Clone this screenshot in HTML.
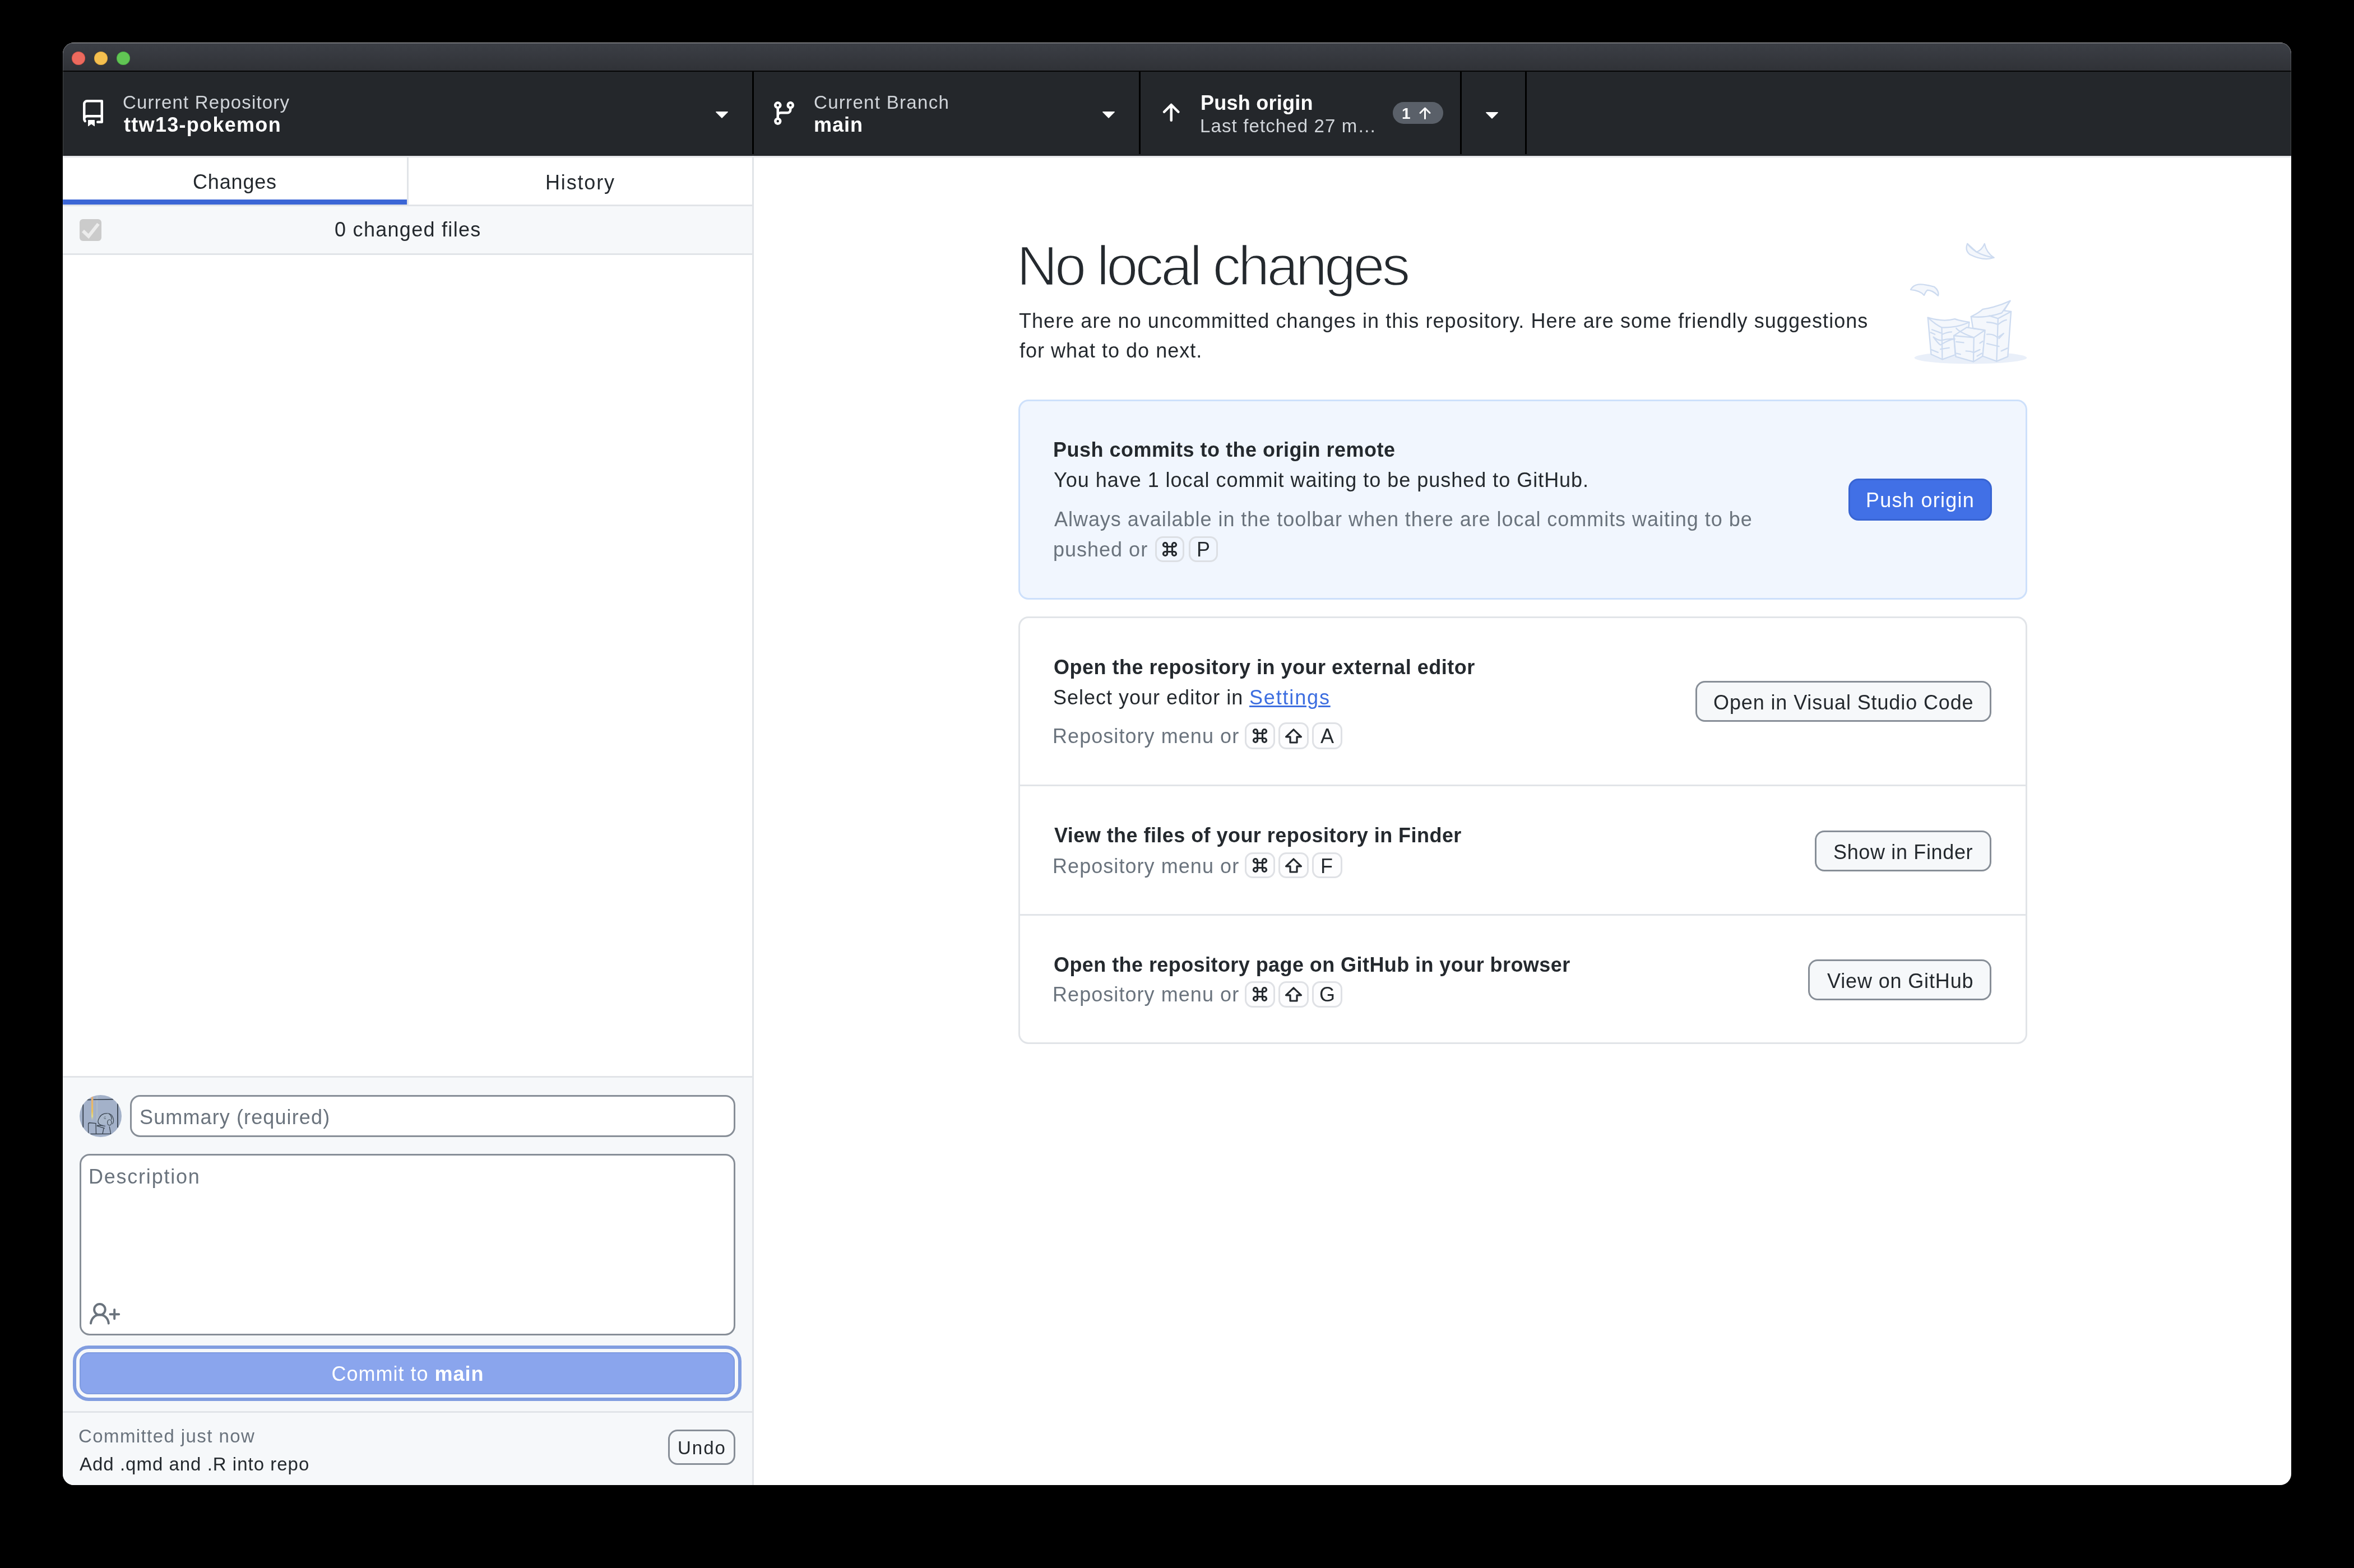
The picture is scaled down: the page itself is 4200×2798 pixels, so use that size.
<!DOCTYPE html>
<html><head><meta charset="utf-8">
<style>
html,body{margin:0;padding:0;background:#000;}
body{width:4200px;height:2798px;background:#000;position:relative;overflow:hidden;font-family:"Liberation Sans",sans-serif;}
.a{position:absolute;box-sizing:border-box;}
.t{position:absolute;white-space:nowrap;font-family:"Liberation Sans",sans-serif;will-change:transform;}
svg{position:absolute;overflow:visible;}
</style></head><body>
<!-- window -->
<div class="a" style="left:112px;top:76px;width:3976px;height:2574px;border-radius:20px;background:#fff;overflow:hidden;">
  <!-- title bar -->
  <div class="a" style="left:0;top:0;width:3976px;height:50px;background:linear-gradient(#3c3f46,#303237);box-shadow:inset 0 1px 0 rgba(255,255,255,0.6);"></div>
  <div class="a" style="left:0;top:50px;width:3976px;height:2px;background:#050505;"></div>
  <!-- toolbar -->
  <div class="a" style="left:0;top:52px;width:3976px;height:150px;background:#24272b;border-bottom:1px solid #16181b;"></div>
  <div class="a" style="left:0;top:202px;width:3976px;height:3px;background:#e3e4e8;"></div>
  <!-- left pane -->
  <div class="a" style="left:1230px;top:205px;width:3px;height:2369px;background:#e1e4e8;"></div>
  <!-- bottom-left pane bg -->
  <div class="a" style="left:0;top:1844px;width:1230px;height:3px;background:#e1e4e8;"></div>
  <div class="a" style="left:0;top:1847px;width:1230px;height:727px;background:#f6f8fa;"></div>
  <div class="a" style="left:0;top:2442px;width:1230px;height:3px;background:#e1e4e8;"></div>
</div>
<div class="a" style="left:112px;top:76px;width:3976px;height:2574px;border-radius:20px;border:1px solid rgba(255,255,255,0.15);pointer-events:none;z-index:5;"></div>
<!-- traffic lights -->
<div class="a" style="left:128px;top:92px;width:24px;height:24px;border-radius:50%;background:#ec6a5e;box-shadow:inset 0 0 0 1px rgba(190,50,40,0.35);"></div>
<div class="a" style="left:168px;top:92px;width:24px;height:24px;border-radius:50%;background:#f4bf4f;box-shadow:inset 0 0 0 1px rgba(190,130,30,0.35);"></div>
<div class="a" style="left:208px;top:92px;width:24px;height:24px;border-radius:50%;background:#61c554;box-shadow:inset 0 0 0 1px rgba(40,140,40,0.35);"></div>

<!-- toolbar dividers -->
<div class="a" style="left:1342px;top:128px;width:3px;height:147px;background:#000;"></div>
<div class="a" style="left:2032px;top:128px;width:3px;height:147px;background:#000;"></div>
<div class="a" style="left:2605px;top:128px;width:3px;height:147px;background:#000;"></div>
<div class="a" style="left:2721px;top:128px;width:3px;height:147px;background:#000;"></div>

<!-- toolbar icons -->
<svg style="left:142px;top:178px" width="48" height="48" viewBox="0 0 16 16"><path fill="#fff" d="M2 2.5A2.5 2.5 0 0 1 4.5 0h8.75a.75.75 0 0 1 .75.75v12.5a.75.75 0 0 1-.75.75h-2.5a.75.75 0 0 1 0-1.5h1.75v-2h-8a1 1 0 0 0-.714 1.7.75.75 0 1 1-1.072 1.05A2.495 2.495 0 0 1 2 11.5Zm10.5-1h-8a1 1 0 0 0-1 1v6.708A2.486 2.486 0 0 1 4.5 9h8ZM5 12.25a.25.25 0 0 1 .25-.25h3.5a.25.25 0 0 1 .25.25v3.25a.25.25 0 0 1-.4.2l-1.45-1.087a.249.249 0 0 0-.3 0L5.4 15.7a.25.25 0 0 1-.4-.2Z"/></svg>
<svg style="left:1263.5px;top:178px" width="48" height="48" viewBox="0 0 16 16"><path fill="#fff" d="m4.427 7.427 3.396 3.396a.25.25 0 0 0 .354 0l3.396-3.396A.25.25 0 0 0 11.396 7H4.604a.25.25 0 0 0-.177.427Z"/></svg>
<svg style="left:1374.5px;top:178px" width="48" height="48" viewBox="0 0 16 16"><path fill="#fff" d="M9.5 3.25a2.25 2.25 0 1 1 3 2.122V6A2.5 2.5 0 0 1 10 8.5H6a1 1 0 0 0-1 1v1.128a2.251 2.251 0 1 1-1.5 0V5.372a2.25 2.25 0 1 1 1.5 0v1.836A2.493 2.493 0 0 1 6 7h4a1 1 0 0 0 1-1v-.628A2.25 2.25 0 0 1 9.5 3.25Zm-6 0a.75.75 0 1 0 1.5 0 .75.75 0 0 0-1.5 0Zm8.25-.75a.75.75 0 1 0 0 1.5.75.75 0 0 0 0-1.5ZM4.25 12a.75.75 0 1 0 0 1.5.75.75 0 0 0 0-1.5Z"/></svg>
<svg style="left:1953.5px;top:178px" width="48" height="48" viewBox="0 0 16 16"><path fill="#fff" d="m4.427 7.427 3.396 3.396a.25.25 0 0 0 .354 0l3.396-3.396A.25.25 0 0 0 11.396 7H4.604a.25.25 0 0 0-.177.427Z"/></svg>
<svg style="left:2065px;top:178px" width="48" height="48" viewBox="0 0 16 16"><path fill="#fff" d="M3.47 7.78a.75.75 0 0 1 0-1.06l4.25-4.25a.75.75 0 0 1 1.06 0l4.25 4.25a.751.751 0 0 1-.018 1.042.751.751 0 0 1-1.042.018L9 4.81v7.44a.75.75 0 0 1-1.5 0V4.81L4.53 7.78a.75.75 0 0 1-1.06 0Z"/></svg>
<div class="a" style="left:2485px;top:182px;width:90px;height:39px;border-radius:20px;background:#5a6069;"></div>
<svg style="left:2526px;top:186.5px" width="32" height="32" viewBox="0 0 16 16"><path fill="#fff" d="M3.47 7.78a.75.75 0 0 1 0-1.06l4.25-4.25a.75.75 0 0 1 1.06 0l4.25 4.25a.751.751 0 0 1-.018 1.042.751.751 0 0 1-1.042.018L9 4.81v7.44a.75.75 0 0 1-1.5 0V4.81L4.53 7.78a.75.75 0 0 1-1.06 0Z"/></svg>
<svg style="left:2637.7px;top:178.5px" width="48" height="48" viewBox="0 0 16 16"><path fill="#fff" d="m4.427 7.427 3.396 3.396a.25.25 0 0 0 .354 0l3.396-3.396A.25.25 0 0 0 11.396 7H4.604a.25.25 0 0 0-.177.427Z"/></svg>

<!-- tabs -->
<div class="a" style="left:112px;top:356px;width:614px;height:9px;background:#3b66d6;"></div>
<div class="a" style="left:726px;top:281px;width:3px;height:84px;background:#e1e4e8;"></div>
<div class="a" style="left:112px;top:365px;width:1230px;height:3px;background:#e1e4e8;"></div>
<div class="a" style="left:112px;top:368px;width:1230px;height:84px;background:#f6f8fa;"></div>
<div class="a" style="left:112px;top:452px;width:1230px;height:3px;background:#e1e4e8;"></div>
<!-- checkbox -->
<div class="a" style="left:142px;top:391px;width:39px;height:39px;border-radius:6px;background:#cbcbcb;"></div>
<svg style="left:0;top:0" width="1" height="1"><polyline points="148,412 158,421.5 175.5,399.5" fill="none" stroke="#ececec" stroke-width="6"/></svg>

<!-- commit area -->
<svg style="left:142px;top:1954px" width="75" height="75" viewBox="0 0 75 75">
  <defs><clipPath id="av"><circle cx="37.5" cy="37.5" r="37.5"/></clipPath>
  <linearGradient id="og" x1="0" y1="0" x2="0" y2="1"><stop offset="0" stop-color="#e9ae72"/><stop offset="0.6" stop-color="#ecc25a"/><stop offset="0.8" stop-color="#e3dc8a"/><stop offset="1" stop-color="#a9b8c4" stop-opacity="0"/></linearGradient></defs>
  <g clip-path="url(#av)">
    <rect width="75" height="75" fill="#a3b1c9"/>
    <rect x="30" y="2" width="2.5" height="44" fill="#b5c3c9" opacity="0.6"/>
    <rect x="21" y="3" width="3.2" height="44" fill="url(#og)"/>
    <path d="M13.3 8.6 L20.5 8.4 M24.5 8.2 L60.5 7.6" stroke="#36404c" stroke-width="1.6" fill="none"/>
    <path d="M6.2 16.5 V58" stroke="#36404c" stroke-width="1.8" fill="none"/>
    <path d="M68 14.8 V58" stroke="#36404c" stroke-width="1.8" fill="none"/>
    <path d="M35 52 C 32 49 33 44 35.5 40 C 38 35 43 33 48 32.8 C 53 32.5 57 34 59 39 C 61 43 61 48 58.5 52" fill="#aab8cc" stroke="#36404c" stroke-width="1.2"/>
    <path d="M35 52 C 38 54 42 55.5 46 55.5" fill="none" stroke="#36404c" stroke-width="1.1"/>
    <path d="M52 33 C 56 36 57.5 40 57 44" fill="none" stroke="#36404c" stroke-width="1.2"/>
    <ellipse cx="53.3" cy="49" rx="3.6" ry="5" fill="#aab8cc" stroke="#36404c" stroke-width="1.2"/>
    <path d="M43.5 40.5 C 44.5 42.8 46 42.8 47 41.5" fill="none" stroke="#36404c" stroke-width="0.9"/>
    <circle cx="45.3" cy="39" r="0.7" fill="#36404c"/>
    <path d="M15.6 69.5 V52 Q15.6 49.5 18 49.5 L29 50.5 L29.5 69.5" fill="none" stroke="#36404c" stroke-width="1.3"/>
    <path d="M30.5 55 L44.8 59.3 M31 54.5 L42 54.3 M43 59.3 L41 69.5 M53.2 56.2 L55.7 69.5 M19.4 69.5 L56 69.4" fill="none" stroke="#36404c" stroke-width="1.3"/>
  </g>
</svg>
<div class="a" style="left:232px;top:1954px;width:1080px;height:75px;border:3px solid #878e97;border-radius:18px;background:#fff;"></div>
<div class="a" style="left:142px;top:2059px;width:1170px;height:324px;border:3px solid #878e97;border-radius:18px;background:#fff;"></div>
<svg style="left:0;top:0" width="1" height="1">
  <circle cx="177.9" cy="2336.8" r="9.8" fill="none" stroke="#6a737d" stroke-width="4"/>
  <path d="M162 2361.5 C 163 2352 170 2346 178 2346 C 186 2346 193 2352 193.8 2361.5" fill="none" stroke="#6a737d" stroke-width="4" stroke-linecap="round"/>
  <path d="M204.2 2337 V2353.3 M196.5 2345.3 H212.2" fill="none" stroke="#6a737d" stroke-width="4" stroke-linecap="round"/>
</svg>
<div class="a" style="left:130px;top:2401px;width:1193px;height:99px;border-radius:28px;border:6px solid #819de0;background:#f6f8fa;"></div>
<div class="a" style="left:142px;top:2413px;width:1169px;height:75px;border-radius:16px;border:2px solid #7f9be0;background:#8aa5ed;"></div>

<div class="a" style="left:1192px;top:2551px;width:119.5px;height:63px;border:3px solid #878e97;border-radius:17px;background:#f6f8fa;"></div>

<!-- right: illustration -->
<svg style="left:3380px;top:410px" width="260" height="260" viewBox="0 0 1568 1568">
 <g fill="#f4f7fc" stroke="#cddbf0" stroke-width="14" stroke-linejoin="round" stroke-linecap="round">
  <ellipse cx="820" cy="1378" rx="605" ry="65" fill="#e9eff9" stroke="none"/>
  <path d="M785 150 C 765 200 780 240 810 265 C 900 310 990 330 1070 300 C 1010 260 980 200 970 150 C 950 200 920 225 885 240 Z"/><path d="M785 150 C 830 210 900 270 1070 300" fill="none"/>
  <path d="M175 645 C 210 580 270 570 430 615 C 465 640 480 680 470 710 C 430 670 390 650 355 650 C 340 660 330 680 320 705 C 290 670 230 650 175 645 Z"/>
  <path d="M360 945 L395 1340 L515 1395 L655 1345 L640 1145 L800 1045 L805 995 C 760 985 700 980 650 960 C 560 985 460 975 360 945 Z"/>
  <path d="M360 945 C 420 1000 460 1030 510 1052 C 620 1055 700 1040 805 995" fill="none"/>
  <path d="M510 1052 L515 1395" fill="none"/>
  <path d="M640 1140 L660 1365 L850 1420 L950 1360 L975 1080 C 900 1070 820 1060 780 1050 L700 1100 Z"/>
  <path d="M640 1140 L855 1160 L975 1080 M855 1160 L850 1420 M665 1060 C 700 1100 770 1130 855 1160" fill="none"/>
  <path d="M825 935 L845 1060 L975 1080 L950 1360 L1100 1415 L1220 1365 L1255 880 L1180 870 L1245 765 C 1150 810 1050 840 950 855 C 900 900 860 915 825 935 Z"/>
  <path d="M825 935 C 950 950 1080 920 1155 895 L1245 765 M1115 955 L1100 1415 M1115 955 L1255 880 M1020 925 L1115 955" fill="none"/>
  <path d="M405 1075 L500 1110 M515 1125 C 550 1110 590 1100 615 1100 M390 1105 L435 1125 M420 1155 C 460 1210 480 1230 495 1240 C 540 1210 600 1180 650 1175 C 600 1170 540 1180 505 1190 C 470 1190 440 1170 420 1155 M495 1285 L590 1270 M395 1290 L470 1320 M670 1330 L710 1340 M665 1205 L745 1215 M770 1305 C 800 1305 830 1310 855 1320 L920 1290 M890 1360 L940 1330 M920 1220 L950 1200 M995 995 C 1050 995 1090 1010 1115 1020 C 1150 990 1180 975 1205 970 M995 1125 C 1050 1120 1090 1140 1110 1160 L1175 1115 L1125 1170 M995 1225 L1125 1255 M1150 1305 L1215 1275" fill="none"/>
 </g>
</svg>

<!-- card 1 -->
<div class="a" style="left:1817px;top:713px;width:1800px;height:357px;border:3px solid #cde0fb;border-radius:18px;background:#f1f6fe;"></div>
<div class="a" style="left:3298px;top:854px;width:256px;height:74.5px;border:3px solid #3864d2;border-radius:18px;background:#4170e6;"></div>
<!-- card 2 -->
<div class="a" style="left:1817px;top:1100px;width:1800px;height:763px;border:3px solid #e1e4e8;border-radius:18px;background:#fff;"></div>
<div class="a" style="left:1820px;top:1400px;width:1794px;height:3px;background:#e1e4e8;"></div>
<div class="a" style="left:1820px;top:1631px;width:1794px;height:3px;background:#e1e4e8;"></div>
<div class="a" style="left:3025px;top:1215px;width:528px;height:73px;border:3px solid #878e97;border-radius:17px;background:#f6f8fa;"></div>
<div class="a" style="left:3238px;top:1481.5px;width:315px;height:73px;border:3px solid #878e97;border-radius:17px;background:#f6f8fa;"></div>
<div class="a" style="left:3225.5px;top:1712px;width:327.5px;height:73px;border:3px solid #878e97;border-radius:17px;background:#f6f8fa;"></div>

<!-- kbds -->
<div class="a" style="left:2061px;top:957px;width:52px;height:46px;border:3px solid #dcdfe4;border-radius:14px;"></div>
<div class="a" style="left:2121px;top:957px;width:52px;height:46px;border:3px solid #dcdfe4;border-radius:14px;"></div>
<div class="a" style="left:2221px;top:1289px;width:53.5px;height:48px;border:3px solid #dfe1e5;border-radius:14px;background:#fdfdfe;"></div>
<div class="a" style="left:2281px;top:1289px;width:53.5px;height:48px;border:3px solid #dfe1e5;border-radius:14px;background:#fdfdfe;"></div>
<div class="a" style="left:2341px;top:1289px;width:53.5px;height:48px;border:3px solid #dfe1e5;border-radius:14px;background:#fdfdfe;"></div>
<div class="a" style="left:2221px;top:1520.5px;width:53.5px;height:46.5px;border:3px solid #dfe1e5;border-radius:14px;background:#fdfdfe;"></div>
<div class="a" style="left:2281px;top:1520.5px;width:53.5px;height:46.5px;border:3px solid #dfe1e5;border-radius:14px;background:#fdfdfe;"></div>
<div class="a" style="left:2341px;top:1520.5px;width:53.5px;height:46.5px;border:3px solid #dfe1e5;border-radius:14px;background:#fdfdfe;"></div>
<div class="a" style="left:2221px;top:1751px;width:53.5px;height:46.5px;border:3px solid #dfe1e5;border-radius:14px;background:#fdfdfe;"></div>
<div class="a" style="left:2281px;top:1751px;width:53.5px;height:46.5px;border:3px solid #dfe1e5;border-radius:14px;background:#fdfdfe;"></div>
<div class="a" style="left:2341px;top:1751px;width:53.5px;height:46.5px;border:3px solid #dfe1e5;border-radius:14px;background:#fdfdfe;"></div>
<!-- cmd glyphs -->
<svg style="left:2074px;top:967px" width="26" height="26" viewBox="0 0 26 26"><path fill="none" stroke="#24292e" stroke-width="3.2" d="M8.5 21V5A3.5 3.5 0 1 0 5 8.5H21A3.5 3.5 0 1 0 17.5 5V21A3.5 3.5 0 1 0 21 17.5H5A3.5 3.5 0 1 0 8.5 21Z"/></svg>
<svg style="left:2234.6px;top:1300px" width="26" height="26" viewBox="0 0 26 26"><path fill="none" stroke="#24292e" stroke-width="3.2" d="M8.5 21V5A3.5 3.5 0 1 0 5 8.5H21A3.5 3.5 0 1 0 17.5 5V21A3.5 3.5 0 1 0 21 17.5H5A3.5 3.5 0 1 0 8.5 21Z"/></svg>
<svg style="left:2234.6px;top:1531px" width="26" height="26" viewBox="0 0 26 26"><path fill="none" stroke="#24292e" stroke-width="3.2" d="M8.5 21V5A3.5 3.5 0 1 0 5 8.5H21A3.5 3.5 0 1 0 17.5 5V21A3.5 3.5 0 1 0 21 17.5H5A3.5 3.5 0 1 0 8.5 21Z"/></svg>
<svg style="left:2234.6px;top:1761px" width="26" height="26" viewBox="0 0 26 26"><path fill="none" stroke="#24292e" stroke-width="3.2" d="M8.5 21V5A3.5 3.5 0 1 0 5 8.5H21A3.5 3.5 0 1 0 17.5 5V21A3.5 3.5 0 1 0 21 17.5H5A3.5 3.5 0 1 0 8.5 21Z"/></svg>
<!-- shift glyphs -->
<svg style="left:2292.8px;top:1300px" width="30" height="27" viewBox="0 0 30 27"><path fill="none" stroke="#24292e" stroke-width="3.2" stroke-linejoin="round" d="M15 1.8L1.5 14.8H9V25H21V14.8H28.5Z"/></svg>
<svg style="left:2292.8px;top:1531px" width="30" height="27" viewBox="0 0 30 27"><path fill="none" stroke="#24292e" stroke-width="3.2" stroke-linejoin="round" d="M15 1.8L1.5 14.8H9V25H21V14.8H28.5Z"/></svg>
<svg style="left:2292.8px;top:1761px" width="30" height="27" viewBox="0 0 30 27"><path fill="none" stroke="#24292e" stroke-width="3.2" stroke-linejoin="round" d="M15 1.8L1.5 14.8H9V25H21V14.8H28.5Z"/></svg>

<div class='t' style='left:219.0px;top:166.1px;font-size:33px;line-height:33px;font-weight:400;color:#d1d5da;letter-spacing:1.18px;'>Current Repository</div>
<div class='t' style='left:221.0px;top:205.0px;font-size:36px;line-height:36px;font-weight:700;color:#ffffff;letter-spacing:1.30px;'>ttw13-pokemon</div>
<div class='t' style='left:1452.0px;top:166.1px;font-size:33px;line-height:33px;font-weight:400;color:#d1d5da;letter-spacing:1.31px;'>Current Branch</div>
<div class='t' style='left:1452.0px;top:204.5px;font-size:36px;line-height:36px;font-weight:700;color:#ffffff;letter-spacing:1.00px;'>main</div>
<div class='t' style='left:2142.0px;top:165.5px;font-size:36px;line-height:36px;font-weight:700;color:#ffffff;letter-spacing:0.25px;'>Push origin</div>
<div class='t' style='left:2141.0px;top:207.8px;font-size:33px;line-height:33px;font-weight:400;color:#d1d5da;letter-spacing:1.12px;'>Last fetched 27 m…</div>
<div class='t' style='left:344.0px;top:307.0px;font-size:36px;line-height:36px;font-weight:400;color:#24292e;letter-spacing:0.83px;'>Changes</div>
<div class='t' style='left:972.5px;top:308.0px;font-size:36px;line-height:36px;font-weight:400;color:#24292e;letter-spacing:1.83px;'>History</div>
<div class='t' style='left:597.0px;top:392.2px;font-size:36px;line-height:36px;font-weight:400;color:#24292e;letter-spacing:1.29px;'>0 changed files</div>
<div class='t' style='left:249.0px;top:1975.5px;font-size:36px;line-height:36px;font-weight:400;color:#6a737d;letter-spacing:1.12px;'>Summary (required)</div>
<div class='t' style='left:158.0px;top:2081.9px;font-size:36px;line-height:36px;font-weight:400;color:#6a737d;letter-spacing:1.77px;'>Description</div>
<div class='t' style='left:140.0px;top:2545.9px;font-size:33px;line-height:33px;font-weight:400;color:#6a737d;letter-spacing:1.41px;'>Committed just now</div>
<div class='t' style='left:142.0px;top:2596.4px;font-size:33px;line-height:33px;font-weight:400;color:#24292e;letter-spacing:1.00px;'>Add .qmd and .R into repo</div>
<div class='t' style='left:1209.3px;top:2567.1px;font-size:33px;line-height:33px;font-weight:400;color:#24292e;letter-spacing:2.00px;'>Undo</div>
<div class='t' style='left:1813.8px;top:424.0px;font-size:101px;line-height:101px;font-weight:400;color:#24292e;letter-spacing:-4.84px;-webkit-text-stroke:2.4px #ffffff;paint-order:normal;'>No local changes</div>
<div class='t' style='left:1818.0px;top:554.7px;font-size:36px;line-height:36px;font-weight:400;color:#24292e;letter-spacing:1.05px;'>There are no uncommitted changes in this repository. Here are some friendly suggestions</div>
<div class='t' style='left:1819.0px;top:608.4px;font-size:36px;line-height:36px;font-weight:400;color:#24292e;letter-spacing:1.00px;'>for what to do next.</div>
<div class='t' style='left:1879.0px;top:785.0px;font-size:36px;line-height:36px;font-weight:700;color:#24292e;letter-spacing:0.50px;'>Push commits to the origin remote</div>
<div class='t' style='left:1880.0px;top:838.9px;font-size:36px;line-height:36px;font-weight:400;color:#24292e;letter-spacing:0.98px;'>You have 1 local commit waiting to be pushed to GitHub.</div>
<div class='t' style='left:1881.0px;top:908.5px;font-size:36px;line-height:36px;font-weight:400;color:#6a737d;letter-spacing:0.96px;'>Always available in the toolbar when there are local commits waiting to be</div>
<div class='t' style='left:1879.0px;top:963.1px;font-size:36px;line-height:36px;font-weight:400;color:#6a737d;letter-spacing:1.00px;'>pushed or</div>
<div class='t' style='left:3329.0px;top:875.2px;font-size:36px;line-height:36px;font-weight:400;color:#ffffff;letter-spacing:1.27px;'>Push origin</div>
<div class='t' style='left:1880.0px;top:1173.0px;font-size:36px;line-height:36px;font-weight:700;color:#24292e;letter-spacing:0.50px;'>Open the repository in your external editor</div>
<div class='t' style='left:1879.0px;top:1226.5px;font-size:36px;line-height:36px;font-weight:400;color:#24292e;letter-spacing:1.00px;'>Select your editor in</div>
<div class='t' style='left:2229.0px;top:1226.5px;font-size:36px;line-height:36px;font-weight:400;color:#3d6ee0;letter-spacing:1.83px;text-decoration:underline;text-underline-offset:2px;text-decoration-thickness:3px;'>Settings</div>
<div class='t' style='left:1878.0px;top:1296.1px;font-size:36px;line-height:36px;font-weight:400;color:#6a737d;letter-spacing:1.06px;'>Repository menu or</div>
<div class='t' style='left:3057.0px;top:1235.8px;font-size:36px;line-height:36px;font-weight:400;color:#24292e;letter-spacing:0.88px;'>Open in Visual Studio Code</div>
<div class='t' style='left:1881.0px;top:1473.2px;font-size:36px;line-height:36px;font-weight:700;color:#24292e;letter-spacing:0.45px;'>View the files of your repository in Finder</div>
<div class='t' style='left:1878.0px;top:1527.5px;font-size:36px;line-height:36px;font-weight:400;color:#6a737d;letter-spacing:1.06px;'>Repository menu or</div>
<div class='t' style='left:3270.6px;top:1502.5px;font-size:36px;line-height:36px;font-weight:400;color:#24292e;letter-spacing:0.65px;'>Show in Finder</div>
<div class='t' style='left:1880.0px;top:1704.1px;font-size:36px;line-height:36px;font-weight:700;color:#24292e;letter-spacing:0.43px;'>Open the repository page on GitHub in your browser</div>
<div class='t' style='left:1878.0px;top:1757.3px;font-size:36px;line-height:36px;font-weight:400;color:#6a737d;letter-spacing:1.06px;'>Repository menu or</div>
<div class='t' style='left:3259.8px;top:1732.5px;font-size:36px;line-height:36px;font-weight:400;color:#24292e;letter-spacing:0.85px;'>View on GitHub</div>
<div class='t' style='left:2134.5px;top:963.1px;font-size:36px;line-height:36px;font-weight:400;color:#24292e;letter-spacing:0.00px;'>P</div>
<div class='t' style='left:2356.0px;top:1295.8px;font-size:36px;line-height:36px;font-weight:400;color:#24292e;letter-spacing:0.00px;'>A</div>
<div class='t' style='left:2356.0px;top:1527.5px;font-size:36px;line-height:36px;font-weight:400;color:#24292e;letter-spacing:0.00px;'>F</div>
<div class='t' style='left:2354.0px;top:1757.3px;font-size:36px;line-height:36px;font-weight:400;color:#24292e;letter-spacing:0.00px;'>G</div>
<div class='t' style='left:2500.5px;top:188.6px;font-size:28px;line-height:28px;font-weight:700;color:#ffffff;letter-spacing:0.00px;'>1</div>
<div class='t' style='left:0;top:2433.5px;width:4200px;text-align:center;font-size:36px;line-height:36px;color:#fff;letter-spacing:1px;'><span style='position:absolute;left:591.5px'>Commit to <b>main</b></span></div>
</body></html>
